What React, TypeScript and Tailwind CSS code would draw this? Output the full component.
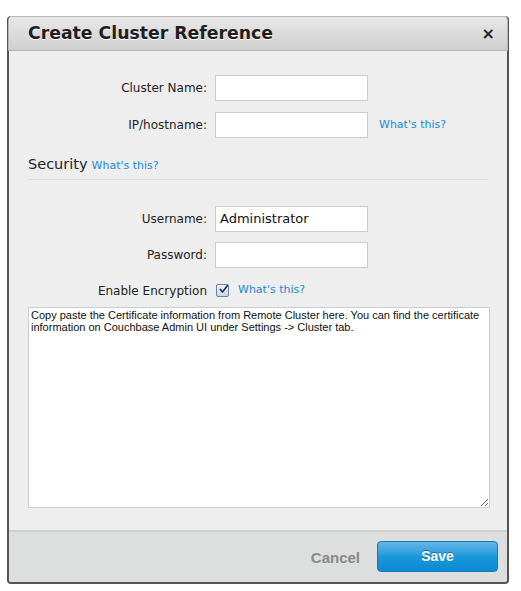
import React from "react";

const font = { fontFamily: '"DejaVu Sans", Verdana, sans-serif' };
const arial = { fontFamily: '"Liberation Sans", Arial, sans-serif' };

function Field({ label, value, help }: { label: string; value?: string; help?: boolean }) {
  return (
    <div className="flex items-center h-[26px]">
      <label className="w-[179px] text-right text-[12px] text-[#222]">{label}</label>
      <input
        readOnly
        value={value ?? ""}
        className="ml-[8px] h-[26px] w-[153px] border border-[#cccccc] bg-white px-[4px] text-[13px] text-[#111] outline-none"
      />
      {help && <a className="ml-[11px] text-[11px] text-[#1b8ad3]">What's this?</a>}
    </div>
  );
}

export default function App() {
  return (
    <div className="min-h-[591px] bg-white pt-[16px] pl-[7px]" style={font}>
      <div className="w-[502px] rounded-[4px] border-x-2 border-b-2 border-[#555] bg-[#eeeeee]">
        <div className="-mx-[1px] flex h-[35px] items-center justify-between rounded-t-[4px] border border-[#b5b5b5] bg-gradient-to-b from-[#e8e8e8] to-[#cfcfcf] pl-[19px] pr-[12px]">
          <h1 className="text-[17.3px] font-bold text-[#1e1e1e] [text-shadow:0_1px_0_#fff]">Create Cluster Reference</h1>
          <span className="text-[16px] font-bold text-[#222] leading-none">×</span>
        </div>

        <div className="px-[19px] pt-[24px] pb-[22px]">
          <div className="flex flex-col gap-[11px]">
            <Field label="Cluster Name:" />
            <Field label="IP/hostname:" help />
          </div>

          <div className="mt-[16px] flex items-baseline border-b border-[#dcdcdc] pb-[4px]">
            <span className="text-[14.5px] leading-[20px] text-[#222]">Security</span>
            <a className="ml-[4px] text-[11px] text-[#1b8ad3]">What's this?</a>
          </div>

          <div className="mt-[26px] flex flex-col gap-[10px]">
            <Field label="Username:" value="Administrator" />
            <Field label="Password:" />
          </div>

          <div className="mt-[13px] flex items-center h-[20px]">
            <span className="w-[179px] text-right text-[12px] text-[#222]">Enable Encryption</span>
            <span className="ml-[9px] flex h-[13px] w-[13px] items-center justify-center rounded-[2px] border border-[#6a7fa6] bg-gradient-to-b from-[#f4f6fb] to-[#c9d4e8]">
              <svg width="13" height="13" viewBox="0 0 13 13" className="-mt-[3px] ml-[2px]">
                <path d="M2 6.5 L5 10 L12 1" fill="none" stroke="#1c2c4a" strokeWidth="2.4" strokeLinecap="round" strokeLinejoin="round" />
              </svg>
            </span>
            <a className="ml-[9px] text-[11px] text-[#1b8ad3]">What's this?</a>
          </div>

          <textarea
            readOnly
            className="mt-[6px] block h-[201px] w-[462px] resize-y border border-[#c7cdd1] bg-white px-[2px] py-[1px] text-[11px] leading-[12px] text-[#111] outline-none"
            style={arial}
            value="Copy paste the Certificate information from Remote Cluster here. You can find the certificate information on Couchbase Admin UI under Settings -> Cluster tab."
          />
        </div>

        <div className="flex h-[52px] items-center justify-end border-t-2 border-[#d0d0d0] bg-[#dddfde] pr-[9px] rounded-b-[3px]">
          <span className="mr-[17px] mt-[4px] text-[15px] font-bold text-[#888]" style={arial}>Cancel</span>
          <button
            className="h-[31px] w-[121px] rounded-[4px] border border-[#1a78b8] bg-gradient-to-b from-[#63b6e6] via-[#1a98dc] to-[#0a8ad3] text-[14px] font-bold text-white [text-shadow:0_-1px_0_#1a6fa8]"
            style={arial}
          >
            Save
          </button>
        </div>
      </div>
    </div>
  );
}
